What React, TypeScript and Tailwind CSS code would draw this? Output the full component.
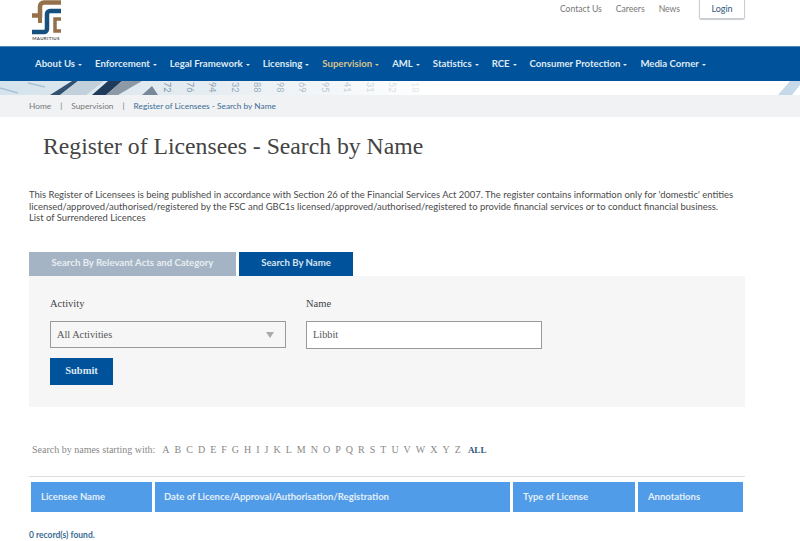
const navItems = ['About Us', 'Enforcement', 'Legal Framework', 'Licensing', 'Supervision', 'AML', 'Statistics', 'RCE', 'Consumer Protection', 'Media Corner'];
const letters = 'ABCDEFGHIJKLMNOPQRSTUVWXYZ'.split('');
const numbers = ['72', '76', '94', '32', '88', '98', '69', '95', '41', '31', '52', '18'];

function Logo() {
  return (
    <svg width="30" height="35" viewBox="0 0 30 35" fill="none">
      <path d="M30 2.5H13a4 4 0 0 0-4 4V15.5H1" stroke="#94714a" strokeWidth="4.5" />
      <path d="M9 15V23" stroke="#94714a" strokeWidth="4" />
      <path d="M30 11H19a3 3 0 0 0-3 3V29a3 3 0 0 1-3 3H1" stroke="#17507f" strokeWidth="4.5" />
      <path d="M30 19H24V31H30" stroke="#94714a" strokeWidth="3.5" />
    </svg>
  );
}

function Banner() {
  return (
    <svg width="800" height="14" viewBox="0 0 800 14" className="block">
      <defs>
        <linearGradient id="fade" x1="0" x2="1" y1="0" y2="0">
          <stop offset="0" stopColor="#d5e3ec" />
          <stop offset="0.5" stopColor="#e6edf2" />
          <stop offset="1" stopColor="#ffffff" />
        </linearGradient>
      </defs>
      <rect width="430" height="14" fill="url(#fade)" />
      <path d="M0 7L18 12M28 2L45 6" stroke="#a9c3d6" strokeWidth="1.5" />
      <path d="M50 14L72 0H78L60 14Z" fill="#32506f" />
      <path d="M60 14L78 0H104L86 14Z" fill="#c2d0dc" />
      <path d="M92 14L108 0H122L106 14Z" fill="#1f3a5a" />
      <path d="M106 14L122 0H142L118 14Z" fill="#8d99a6" />
      <path d="M142 14L152 5L158 14Z" fill="#77889a" />
      {numbers.map((n, i) => (
        <text key={i} x={161 + i * 22.5} y="10" fontSize="9" fill="#7f96aa" opacity={1 - i * 0.07} fontFamily="Lato, sans-serif" transform={`rotate(90 ${167 + i * 22.5} 7)`}>{n}</text>
      ))}
      <path d="M778 14L790 0H800V4L792 14Z" fill="#c5d9e8" />
    </svg>
  );
}

export default function App() {
  return (
    <div className="h-[541px] w-[800px] overflow-hidden bg-white font-['Lato',sans-serif]">
      <header className="flex h-[46px] justify-between overflow-hidden pl-[31px] pr-[55px]">
        <div className="flex flex-col items-center self-start">
          <Logo />
          <span className="mt-[1px] text-[4.5px] leading-[5px] font-bold tracking-[0.3px] text-[#555]">MAURITIUS</span>
        </div>
        <div className="flex items-start">
          <nav className="mt-[3px] flex gap-[14px] text-[8.6px] leading-[12px] text-[#777]">
            <span>Contact Us</span>
            <span>Careers</span>
            <span>News</span>
          </nav>
          <button className="ml-[19px] -mt-[2px] h-[21px] w-[46px] rounded-[2px] border border-[#c5ced6] text-[9px] text-[#33597c] shadow-[0_1px_1px_#ccc]">Login</button>
        </div>
      </header>

      <nav className="flex h-[35px] items-center gap-[13px] border-t border-[#4b8bbb] bg-[#00529b] pl-[35px] text-[9.6px] font-bold text-[#dfe9f2]">
        {navItems.map(item => (
          <span key={item} className={`flex items-center gap-[3px] ${item === 'Supervision' ? 'text-[#d8c48d]' : ''}`}>
            {item}
            <span className="mt-[3px] h-0 w-0 border-x-[2.5px] border-t-[2.5px] border-x-transparent border-t-current" />
          </span>
        ))}
      </nav>

      <Banner />

      <div className="flex h-[22px] items-center bg-[#f1f2f4] pl-[29px] text-[8.3px] text-[#777]">
        <span>Home</span>
        <span className="mx-[9px]">|</span>
        <span>Supervision</span>
        <span className="mx-[9px]">|</span>
        <span className="text-[#3b6d94]">Register of Licensees - Search by Name</span>
      </div>

      <main className="px-[29px]">
        <h1 className="mt-[13px] pl-[14px] font-['Liberation_Serif',serif] text-[23.7px] leading-[32px] text-[#444]">Register of Licensees - Search by Name</h1>

        <div className="mt-[27px] text-[9.45px] leading-[11.5px] text-[#4a4a4a]">
          <p>This Register of Licensees is being published in accordance with Section 26 of the Financial Services Act 2007. The register contains information only for 'domestic' entities</p>
          <p>licensed/approved/authorised/registered by the FSC and GBC1s licensed/approved/authorised/registered to provide financial services or to conduct financial business.</p>
          <p>List of Surrendered Licences</p>
        </div>

        <div className="mt-[28px] flex gap-[3px] text-[9.6px] font-bold">
          <div className="flex h-[24px] w-[207px] items-center justify-center bg-[#a4b4c4] text-[#e8edf2]">Search By Relevant Acts and Category</div>
          <div className="flex h-[24px] w-[114px] items-center justify-center bg-[#00529b] text-[#d8e4ef]">Search By Name</div>
        </div>

        <section className="h-[131px] w-[716px] bg-[#f6f6f6] px-[21px] pt-[22px] font-['Liberation_Serif',serif]">
          <div className="flex gap-[20px]">
            <div>
              <label className="block text-[10.5px] leading-[12px] text-[#444]">Activity</label>
              <div className="mt-[11px] flex h-[27px] w-[236px] items-center justify-between border border-[#999] pt-[2px] pl-[6px] pr-[11px] text-[10.3px] text-[#555]">
                All Activities
                <span className="h-0 w-0 border-x-[4px] border-t-[6px] border-x-transparent border-t-[#aaa]" />
              </div>
            </div>
            <div>
              <label className="block text-[10.5px] leading-[12px] text-[#444]">Name</label>
              <div className="mt-[11px] flex h-[28px] w-[236px] items-center border border-[#999] bg-white pt-[1px] pl-[6px] text-[10.3px] text-[#555]">Libbit</div>
            </div>
          </div>
          <button className="mt-[9px] block h-[27px] w-[63px] bg-[#00529b] text-[10.5px] font-bold text-[#dbe7f1]">Submit</button>
        </section>

        <div className="mt-[35px] flex items-baseline pl-[3px] font-['Liberation_Serif',serif] text-[10px] text-[#888]">
          <span>Search by names starting with:</span>
          <span className="ml-[7px] flex gap-[5px]">
            {letters.map(l => <span key={l}>{l}</span>)}
          </span>
          <span className="ml-[7px] text-[9px] font-bold text-[#33597c]">ALL</span>
        </div>

        <div className="mt-[19px] flex h-[36px] w-[716px] gap-[3px] border-t border-[#ddd] px-[2px] pt-[5px] text-[9.5px] font-bold text-[#e3eef8]">
          <div className="flex w-[121px] items-center bg-[#519ce8] pt-[1px] pl-[10px]">Licensee Name</div>
          <div className="flex w-[355px] items-center bg-[#519ce8] pt-[1px] pl-[9px]">Date of Licence/Approval/Authorisation/Registration</div>
          <div className="flex w-[122px] items-center bg-[#519ce8] pt-[1px] pl-[10px]">Type of License</div>
          <div className="flex w-[105px] items-center bg-[#519ce8] pt-[1px] pl-[10px]">Annotations</div>
        </div>

        <p className="mt-[17px] text-[8.5px] font-bold text-[#3b6d94]">0 record(s) found.</p>
      </main>
    </div>
  );
}
